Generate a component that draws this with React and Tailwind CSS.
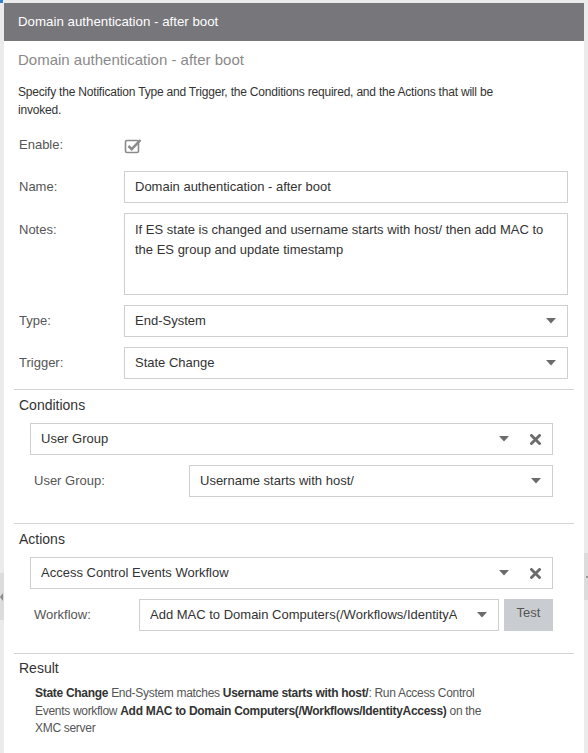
import React from 'react';

const font = { fontFamily: '"Liberation Sans", Arial, sans-serif' };

function Caret() {
  return (
    <svg width="10" height="6" viewBox="0 0 10 6" className="shrink-0">
      <path d="M0 0h10L5 5.5z" fill="#6b6b6b" />
    </svg>
  );
}

function Cross() {
  return (
    <svg width="11" height="11" viewBox="0 0 11 11" className="shrink-0">
      <path d="M1.5 1.5l8 8M9.5 1.5l-8 8" stroke="#6b6b6b" strokeWidth="2.8" strokeLinecap="square" />
    </svg>
  );
}

function CheckSquare() {
  return (
    <svg width="19" height="17" viewBox="0 0 19 17">
      <rect x="1.5" y="3.5" width="13" height="12" rx="1.5" fill="none" stroke="#8a8a8a" strokeWidth="1.6" />
      <path d="M4.5 9l3.2 3.2L16.5 3" fill="none" stroke="#8a8a8a" strokeWidth="2.5" />
    </svg>
  );
}

function Select({ value, removable, className = '' }) {
  return (
    <div className={`flex h-[32px] items-center border border-[#cfcfcf] bg-white pl-[10px] pr-[11px] text-[13px] text-[#333] ${className}`}>
      <span className="mr-[20px] flex-1 overflow-hidden whitespace-nowrap">{value}</span>
      <Caret />
      {removable && <span className="ml-[21px] flex"><Cross /></span>}
    </div>
  );
}

function Row({ label, children, className = '' }) {
  return (
    <div className={`flex items-center ${className}`}>
      <span className="w-[105px] shrink-0 text-[13px] text-[#555]">{label}</span>
      <div className="flex-1">{children}</div>
    </div>
  );
}

export default function App() {
  return (
    <div className="relative flex h-[753px] w-[588px] overflow-hidden bg-[#ebebeb]" style={font}>
      <div className="absolute left-0 top-0 h-[3px] w-[3px] bg-[#2f7fd8]" />
      <div className="absolute left-0 top-[573px] flex h-[47px] w-[4px] items-center bg-[#dcdcdc]">
        <span className="h-0 w-0 border-y-[4px] border-r-[3px] border-y-transparent border-r-[#888]" />
      </div>
      <div className="absolute right-0 top-[553px] flex h-[47px] w-[4px] items-center justify-end bg-[#dcdcdc]">
        <span className="h-[2px] w-[2px] bg-[#999]" />
      </div>

      <div className="ml-[4px] mt-[3px] w-[580px] bg-white">
        <div className="flex h-[38px] items-center bg-[#77767b] px-[14px] text-[13.3px] text-white">
          Domain authentication - after boot
        </div>
        <div className="flex h-[39px] items-center px-[14px] text-[15px] text-[#8a8a8a]">
          Domain authentication - after boot
        </div>
        <p className="ml-[14px] w-[500px] pt-[3px] text-[12px] leading-[18px] tracking-[-0.2px] text-[#333]">
          Specify the Notification Type and Trigger, the Conditions required, and the Actions that will be invoked.
        </p>

        <div className="flex flex-col px-[15px] pr-[16px]">
          <Row label="Enable:" className="mt-[17px] h-[18px]">
            <CheckSquare />
          </Row>
          <Row label="Name:" className="mt-[17px]">
            <div className="flex h-[32px] items-center border border-[#cfcfcf] px-[10px] text-[13px] text-[#333]">
              Domain authentication - after boot
            </div>
          </Row>
          <div className="mt-[10px] flex">
            <span className="w-[105px] shrink-0 pt-[7px] text-[13px] text-[#555]">Notes:</span>
            <div className="h-[82px] flex-1 border border-[#cfcfcf] px-[10px] pt-[6px] text-[13px] leading-[20px] text-[#333]">
              If ES state is changed and username starts with host/ then add MAC to the ES group and update timestamp
            </div>
          </div>
          <Row label="Type:" className="mt-[10px]">
            <Select value="End-System" />
          </Row>
          <Row label="Trigger:" className="mt-[10px]">
            <Select value="State Change" />
          </Row>
        </div>

        <div className="mx-[10px] mt-[10px] border-t border-[#d4d4d4]" />
        <div className="px-[15px] pt-[5px] text-[14px] leading-[20px] text-[#333]">Conditions</div>
        <div className="flex flex-col pl-[26px] pr-[31px]">
          <Select value="User Group" removable className="mt-[8px]" />
          <div className="mt-[10px] flex items-center">
            <span className="w-[159px] shrink-0 pl-[4px] text-[13px] text-[#555]">User Group:</span>
            <Select value="Username starts with host/" className="flex-1" />
          </div>
        </div>

        <div className="mx-[10px] mt-[26px] border-t border-[#d4d4d4]" />
        <div className="px-[15px] pt-[5px] text-[14px] leading-[20px] text-[#333]">Actions</div>
        <div className="flex flex-col pl-[26px] pr-[31px]">
          <Select value="Access Control Events Workflow" removable className="mt-[8px]" />
          <div className="mt-[10px] flex items-center">
            <span className="w-[109px] shrink-0 pl-[4px] text-[13px] text-[#555]">Workflow:</span>
            <Select value="Add MAC to Domain Computers(/Workflows/IdentityAccess)" className="min-w-0 flex-1" />
            <button className="ml-[5px] h-[32px] w-[49px] bg-[#c9cdd1] pb-[5px] text-[13px] text-[#555]">Test</button>
          </div>
        </div>

        <div className="mx-[10px] mt-[22px] border-t border-[#d4d4d4]" />
        <div className="px-[15px] pt-[4px] text-[14px] leading-[20px] text-[#333]">Result</div>
        <p className="ml-[31px] w-[466px] pt-[7px] text-[12px] leading-[17.5px] tracking-[-0.3px] text-[#555]">
          <b className="text-[#333]">State Change</b> End-System matches <b className="text-[#333]">Username starts with host/</b>: Run Access Control Events workflow <b className="text-[#333]">Add MAC to Domain Computers(/Workflows/IdentityAccess)</b> on the XMC server
        </p>
      </div>
    </div>
  );
}
